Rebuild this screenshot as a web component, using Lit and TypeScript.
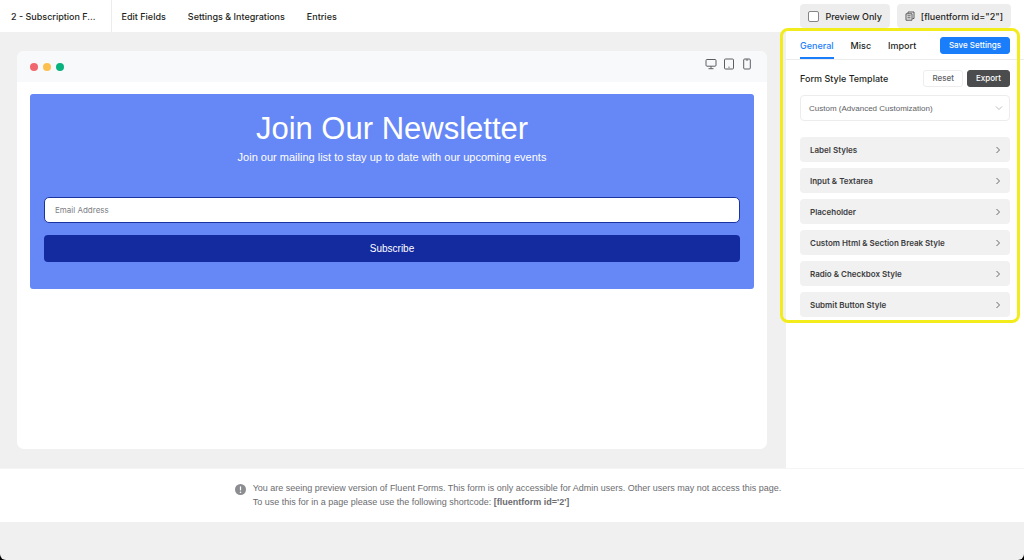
import { LitElement, html, css } from "lit";
import { customElement, state } from "lit/decorators.js";

const SECTIONS = [
  "Label Styles",
  "Input & Textarea",
  "Placeholder",
  "Custom Html & Section Break Style",
  "Radio & Checkbox Style",
  "Submit Button Style",
];

@customElement("top-bar")
class TopBar extends LitElement {
  static styles = css`
    :host {
      display: block;
      background: #fff;
    }
    .bar {
      display: flex;
      align-items: stretch;
      height: 32px;
      font-weight: 500;
      font-size: 9px;
      color: #1e1f21;
      white-space: nowrap;
    }
    .name {
      display: flex;
      align-items: center;
      padding: 0 15px 0 11px;
      border-right: 1px solid #ececec;
    }
    nav {
      display: flex;
      align-items: center;
      gap: 22px;
      padding-left: 10px;
      flex: 1;
    }
    a {
      color: inherit;
      text-decoration: none;
    }
    .tools {
      display: flex;
      gap: 7px;
      padding: 4px 13px 4px 0;
    }
    .chip {
      display: flex;
      align-items: center;
      gap: 6px;
      padding: 0 8px;
      border: 0;
      border-radius: 4px;
      background: #ededed;
      color: inherit;
      font: inherit;
    }
    .chip svg {
      display: block;
      width: 10px;
      height: 10px;
    }
    .check {
      appearance: none;
      box-sizing: border-box;
      width: 11px;
      height: 11px;
      margin: 0;
      border: 1px solid #858585;
      border-radius: 2px;
      background: #fff;
    }
    .check:checked {
      background: #1a7efb;
    }
  `;

  render() {
    return html`
      <header class="bar">
        <div class="name">2 - Subscription F...</div>
        <nav>
          <a href="#fields">Edit Fields</a>
          <a href="#settings">Settings &amp; Integrations</a>
          <a href="#entries">Entries</a>
        </nav>
        <div class="tools">
          <label class="chip"><input class="check" type="checkbox" />Preview Only</label>
          <button class="chip" type="button">
            <svg viewBox="0 0 10 10" fill="none" stroke="#4a4a4a" stroke-width="0.9">
              <path d="M3 2.5V1h6v6.5H7.5M1 2.8h6v6.4H1zM2.4 4.8h3.2M2.4 6.8h3.2" />
            </svg>
            [fluentform id="2"]
          </button>
        </div>
      </header>
    `;
  }
}

@customElement("device-preview")
class DevicePreview extends LitElement {
  static styles = css`
    :host {
      display: flex;
      flex-direction: column;
      border-radius: 7px;
      background: #fff;
      overflow: hidden;
    }
    .chrome {
      display: flex;
      align-items: center;
      justify-content: space-between;
      height: 31px;
      padding: 0 14px 0 13px;
      background: #f8f9fb;
    }
    .dots,
    .devices {
      display: flex;
      align-items: center;
      gap: 5px;
    }
    .devices {
      gap: 6px;
      padding-bottom: 5px;
    }
    .dot {
      width: 8px;
      height: 8px;
      border-radius: 50%;
    }
    .red {
      background: #f0676d;
    }
    .amber {
      background: #fcc04f;
    }
    .green {
      background: #0ab27d;
    }
    .device {
      padding: 0;
      border: 0;
      background: none;
    }
    .device svg {
      display: block;
      width: 12px;
      height: 12px;
    }
    .form {
      margin: 12px 13px;
      padding: 15px 14px 27px;
      border-radius: 3px;
      background: #6687f6;
      color: #fff;
      font-family: "Liberation Sans", sans-serif;
      text-align: center;
    }
    h1 {
      margin: 0;
      font-size: 31px;
      line-height: 40px;
      font-weight: 400;
    }
    p {
      margin: 0 0 32px;
      font-size: 11px;
      line-height: 16px;
    }
    .email {
      display: block;
      box-sizing: border-box;
      width: 100%;
      height: 26px;
      padding: 0 10px;
      border: 1px solid #1c349f;
      border-radius: 5px;
      background: #fff;
      font-family: Inter, sans-serif;
      font-size: 8px;
      color: #333;
    }
    .email::placeholder {
      color: #7d8085;
      opacity: 1;
    }
    .submit {
      display: block;
      width: 100%;
      height: 27px;
      margin-top: 12px;
      border: 0;
      border-radius: 4px;
      background: #142b9f;
      color: #fff;
      font: inherit;
      font-size: 10px;
    }
  `;

  render() {
    return html`
      <div class="chrome">
        <div class="dots">
          <span class="dot red"></span><span class="dot amber"></span><span class="dot green"></span>
        </div>
        <div class="devices">
          <button class="device" type="button" aria-label="Desktop">
            <svg viewBox="0 0 12 12" fill="none" stroke="#5c5e62">
              <rect x="1" y="1.5" width="10" height="6.7" rx="1" />
              <path d="M6 8.2v2.3M3.5 10.7h5" />
            </svg>
          </button>
          <button class="device" type="button" aria-label="Tablet">
            <svg viewBox="0 0 12 12" fill="none" stroke="#5c5e62">
              <rect x="1.5" y="1" width="9" height="10" rx="1" />
              <path d="M5.4 9.2h1.2" />
            </svg>
          </button>
          <button class="device" type="button" aria-label="Phone">
            <svg viewBox="0 0 12 12" fill="none" stroke="#5c5e62">
              <rect x="2.7" y="1" width="6.6" height="10" rx="1" />
              <path d="M4.8 2h2.4" />
            </svg>
          </button>
        </div>
      </div>
      <form class="form" @submit=${(e: Event) => e.preventDefault()}>
        <h1>Join Our Newsletter</h1>
        <p>Join our mailing list to stay up to date with our upcoming events</p>
        <input class="email" type="email" placeholder="Email Address" aria-label="Email Address" />
        <button class="submit" type="submit">Subscribe</button>
      </form>
    `;
  }
}

@customElement("style-panel")
class StylePanel extends LitElement {
  @state() tab = "General";

  static styles = css`
    :host {
      display: block;
      position: relative;
      background: #fff;
      color: #1e1f21;
    }
    button,
    select {
      font: inherit;
      color: inherit;
    }
    .tabs {
      display: flex;
      align-items: stretch;
      gap: 17px;
      height: 27px;
      padding: 0 14px;
      border-bottom: 1px solid #ececec;
    }
    .tab {
      padding: 0;
      border: 0;
      border-bottom: 2px solid transparent;
      border-top: 2px solid transparent;
      background: none;
      font-size: 9px;
      font-weight: 500;
    }
    .tab.on {
      color: #1a7efb;
      border-bottom-color: #1a7efb;
    }
    .btn {
      height: 17px;
      padding: 0 8px;
      border: 1px solid #ededed;
      border-radius: 3px;
      background: #fff;
      font-size: 8px;
      line-height: 15px;
      font-weight: 500;
      color: #606266;
      white-space: nowrap;
    }
    .btn.save {
      align-self: center;
      margin-left: auto;
      border-color: #1a7efb;
      background: #1a7efb;
      color: #fff;
    }
    .btn.dark {
      border-color: #4b4c4d;
      background: #4b4c4d;
      color: #fff;
    }
    .body {
      padding: 10px 14px 0;
    }
    .head {
      display: flex;
      align-items: center;
      gap: 4px;
    }
    .title {
      flex: 1;
      font-size: 9px;
      font-weight: 500;
    }
    .pick {
      display: grid;
      align-items: center;
      margin-top: 8px;
    }
    .pick select,
    .pick svg {
      grid-area: 1 / 1;
    }
    .pick select {
      appearance: none;
      width: 100%;
      height: 26px;
      padding: 0 8px;
      border: 1px solid #ececec;
      border-radius: 4px;
      background: #fff;
      font-family: "Liberation Sans", sans-serif;
      font-size: 8px;
      color: #606266;
    }
    .pick svg {
      justify-self: end;
      width: 8px;
      height: 8px;
      margin-right: 7px;
      pointer-events: none;
    }
    .list {
      display: grid;
      gap: 6px;
      margin-top: 16px;
    }
    .row {
      display: flex;
      align-items: center;
      justify-content: space-between;
      height: 25px;
      padding: 0 8px 0 10px;
      border: 0;
      border-radius: 4px;
      background: #f1f1f1;
      font-size: 8px;
      font-weight: 600;
      color: #3c3d40;
    }
    .row svg {
      width: 8px;
      height: 8px;
    }
    .frame {
      position: absolute;
      inset: -4px 4px auto -6px;
      height: 289px;
      border: 3px solid #f3ec1c;
      border-radius: 8px;
      pointer-events: none;
    }
  `;

  render() {
    return html`
      <div class="tabs">
        ${["General", "Misc", "Import"].map(
          (t) => html`<button
            type="button"
            class=${t === this.tab ? "tab on" : "tab"}
            @click=${() => (this.tab = t)}
          >${t}</button>`
        )}
        <button class="btn save" type="button">Save Settings</button>
      </div>
      <div class="body">
        <div class="head">
          <label class="title" for="template">Form Style Template</label>
          <button class="btn" type="button">Reset</button>
          <button class="btn dark" type="button">Export</button>
        </div>
        <div class="pick">
          <select id="template">
            <option>Custom (Advanced Customization)</option>
          </select>
          <svg viewBox="0 0 8 8" fill="none" stroke="#b4b6ba" stroke-width="0.9">
            <path d="M1 2.5l3 3 3-3" />
          </svg>
        </div>
        <div class="list">
          ${SECTIONS.map(
            (s) => html`<button class="row" type="button">
              ${s}
              <svg viewBox="0 0 8 8" fill="none" stroke="#55575b" stroke-width="0.9">
                <path d="M2.5 1l3 3-3 3" />
              </svg>
            </button>`
          )}
        </div>
      </div>
      <div class="frame"></div>
    `;
  }
}

@customElement("app-root")
class AppRoot extends LitElement {
  static styles = css`
    :host {
      display: block;
      background: #000;
      font-family: Inter, "Liberation Sans", sans-serif;
    }
    .page {
      display: flex;
      flex-direction: column;
      min-height: 100vh;
      border-radius: 0 0 6px 6px;
      background: #f0f0f0;
      overflow: hidden;
    }
    .main {
      display: flex;
      flex: 1;
    }
    device-preview {
      flex: 1;
      margin: 19px 19px 19px 17px;
    }
    style-panel {
      width: 238px;
    }
    .notice {
      display: flex;
      justify-content: center;
      gap: 7px;
      padding: 12px 8px 13px 0;
      border-top: 1px solid #f5f5f5;
      background: #fff;
      font-family: "Liberation Sans", sans-serif;
      font-size: 9px;
      line-height: 14px;
      color: #6b6c6f;
    }
    .notice p {
      margin: 0;
    }
    .notice svg {
      width: 11px;
      height: 11px;
      margin-top: 3px;
    }
    .tail {
      height: 38px;
    }
  `;

  render() {
    return html`
      <div class="page">
        <top-bar></top-bar>
        <div class="main">
          <device-preview></device-preview>
          <style-panel></style-panel>
        </div>
        <div class="notice">
          <svg viewBox="0 0 11 11">
            <circle cx="5.5" cy="5.5" r="5.5" fill="#8c8d90" />
            <path d="M5.5 2.4v4" stroke="#fff" stroke-width="1.2" />
            <circle cx="5.5" cy="8.2" r="0.8" fill="#fff" />
          </svg>
          <div>
            <p>You are seeing preview version of Fluent Forms. This form is only accessible for Admin users. Other users may not access this page.</p>
            <p>To use this for in a page please use the following shortcode: <b>[fluentform id='2']</b></p>
          </div>
        </div>
        <div class="tail"></div>
      </div>
    `;
  }
}
